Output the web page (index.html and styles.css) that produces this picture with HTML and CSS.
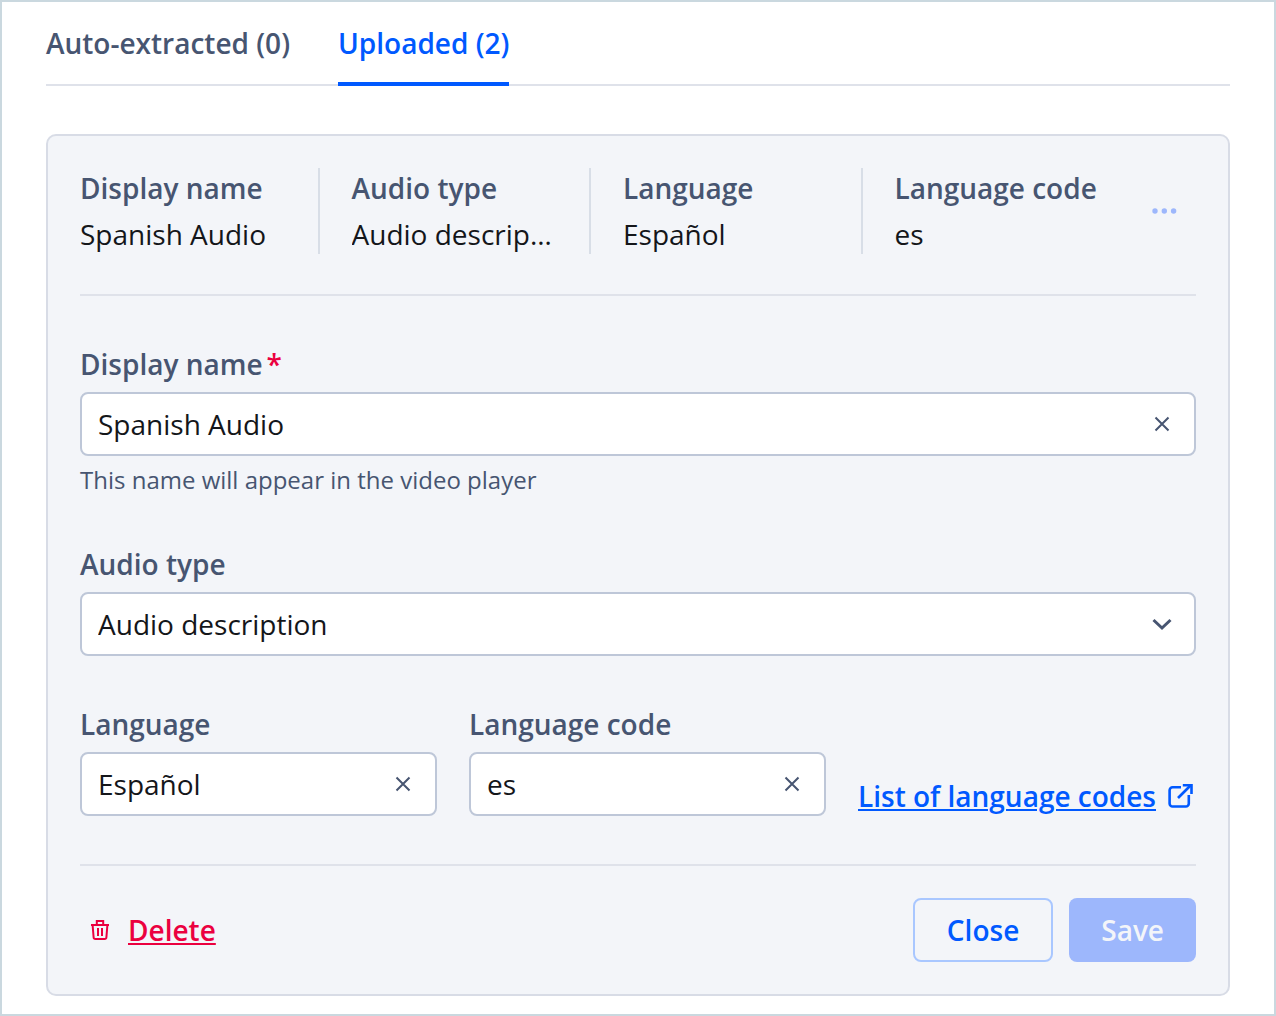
FILE: index.html
```html
<!DOCTYPE html>
<html lang="en">
<head>
<meta charset="utf-8">
<meta name="viewport" content="width=device-width, initial-scale=1">
<title>Audio tracks</title>
<link rel="stylesheet" href="styles.css">
</head>
<body>
<main class="panel">
  <div class="tabs" role="tablist">
    <button class="tab" type="button" role="tab" aria-selected="false">Auto-extracted (0)</button>
    <button class="tab tab-active" type="button" role="tab" aria-selected="true">Uploaded (2)</button>
  </div>

  <form class="card">
    <header class="summary">
      <dl class="summary-list">
        <div class="summary-item"><dt>Display name</dt><dd>Spanish Audio</dd></div>
        <div class="summary-item"><dt>Audio type</dt><dd>Audio description</dd></div>
        <div class="summary-item"><dt>Language</dt><dd>Español</dd></div>
        <div class="summary-item"><dt>Language code</dt><dd>es</dd></div>
      </dl>
      <button class="more" type="button" aria-label="More actions" disabled>
        <svg width="28" height="28" viewBox="0 0 28 28" fill="currentColor" aria-hidden="true"><circle cx="4" cy="14" r="2.7"/><circle cx="13.3" cy="14" r="2.7"/><circle cx="22.6" cy="14" r="2.7"/></svg>
      </button>
    </header>

    <div class="fields">
      <div class="field">
        <label class="label" for="display-name">Display name<span class="required">*</span></label>
        <div class="control">
          <input class="input" id="display-name" type="text" value="Spanish Audio" required aria-describedby="display-name-help">
          <button class="clear" type="button" aria-label="Clear display name"><svg class="icon" viewBox="0 0 28 28" aria-hidden="true"><path d="M7.5 7.5l13 13M20.5 7.5l-13 13"/></svg></button>
        </div>
        <p class="help" id="display-name-help">This name will appear in the video player</p>
      </div>

      <div class="field">
        <label class="label" for="audio-type">Audio type</label>
        <div class="select-wrap">
          <select class="select" id="audio-type"><option>Audio description</option></select>
          <svg class="icon chevron" viewBox="0 0 28 28" aria-hidden="true"><path d="M5.500 10l8.500 8 8.500-8"/></svg>
        </div>
      </div>

      <div class="row">
        <div class="field">
          <label class="label" for="language">Language</label>
          <div class="control">
            <input class="input" id="language" type="text" value="Español">
            <button class="clear" type="button" aria-label="Clear language"><svg class="icon" viewBox="0 0 28 28" aria-hidden="true"><path d="M7.5 7.5l13 13M20.5 7.5l-13 13"/></svg></button>
          </div>
        </div>
        <div class="field">
          <label class="label" for="language-code">Language code</label>
          <div class="control">
            <input class="input" id="language-code" type="text" value="es">
            <button class="clear" type="button" aria-label="Clear language code"><svg class="icon" viewBox="0 0 28 28" aria-hidden="true"><path d="M7.5 7.5l13 13M20.5 7.5l-13 13"/></svg></button>
          </div>
        </div>
        <a class="codes-link" href="#codes"><span class="underlined">List of language codes</span><svg width="32" height="32" viewBox="0 0 32 32" fill="none" stroke="currentColor" stroke-width="2.6" aria-hidden="true"><path d="M17 7.3H8.6a3 3 0 0 0-3 3v13.2a3 3 0 0 0 3 3h13.2a3 3 0 0 0 3-3V15"/><path d="M14 18L26.5 5.5"/><path d="M18.800 5.300H27.500V14" stroke-width="2.600"/></svg></a>
      </div>
    </div>

    <footer class="actions">
      <button class="delete" type="button"><svg width="24" height="24" viewBox="0 0 24 24" fill="none" stroke="currentColor" stroke-width="2" aria-hidden="true"><path d="M3 7h18M8.800 7V3h6.400v4M4.600 7l1 12.200a1.900 1.900 0 0 0 1.900 1.800h9a1.900 1.900 0 0 0 1.900-1.800L19.400 7M10 10v8M14 10v8"/></svg><span class="underlined">Delete</span></button>
      <div class="buttons">
        <button class="button button-outline" type="button">Close</button>
        <button class="button button-primary" type="submit" disabled>Save</button>
      </div>
    </footer>
  </form>
</main>
</body>
</html>
```
FILE: styles.css
```css
* {
  box-sizing: border-box;
}

body {
  margin: 0;
  background: #fff;
  color: #14161a;
  font-family: "Open Sans", "Noto Sans", sans-serif;
  font-size: 28px;
  line-height: 40px;
}

button,
input,
select {
  margin: 0;
  padding: 0;
  border: 0;
  background: none;
  color: inherit;
  font: inherit;
}

svg {
  display: block;
  flex: none;
}

.panel {
  padding: 0 44px 18px;
  border: 2px solid #cad8df;
}

.tabs {
  display: flex;
  gap: 48px;
  margin-bottom: 48px;
  box-shadow: inset 0 -2px #dfe2ea;
}

.tab {
  padding: 22px 0 20px;
  border-bottom: 4px solid transparent;
  color: #475571;
  font-weight: 600;
  line-height: 38px;
}

.tab-active {
  border-color: #0059ff;
  color: #0059ff;
}

.card {
  padding: 32px;
  border: 2px solid #d8dce6;
  border-radius: 10px;
  background: #f3f5f9;
}

.summary {
  display: flex;
  align-items: center;
  padding-bottom: 40px;
  border-bottom: 2px solid #dfe2ea;
}

.summary-list {
  flex: 1;
  display: grid;
  grid-template-columns: repeat(4, minmax(0, 1fr));
  gap: 32px;
  margin: 0;
}

.summary-item {
  display: grid;
  grid-template-columns: minmax(0, 1fr);
  gap: 6px;
  padding-right: 32px;
  border-right: 2px solid #d8dee7;
}

.summary-item:last-child {
  padding-right: 0;
  border-right: 0;
}

.summary-item dt {
  color: #475571;
  font-weight: 600;
}

.summary-item dd {
  margin: 0;
  overflow: hidden;
  text-overflow: ellipsis;
  white-space: nowrap;
}

.more {
  display: flex;
  justify-content: center;
  width: 62px;
  color: #9db7fc;
}

.fields {
  display: grid;
  grid-template-columns: minmax(0, 1fr);
  gap: 48px;
  padding: 48px 0;
  border-bottom: 2px solid #dfe2ea;
}

.field {
  display: grid;
  grid-template-columns: minmax(0, 1fr);
  gap: 8px;
}

.label {
  color: #475571;
  font-weight: 600;
}

.required {
  margin-left: 4px;
  color: #eb003f;
}

.control {
  display: flex;
  align-items: center;
  height: 64px;
  padding: 0 18px 0 16px;
  border: 2px solid #bec7d8;
  border-radius: 8px;
  background: #fff;
}

.input {
  flex: 1;
  min-width: 0;
  height: 60px;
  outline: 0;
}

.icon {
  width: 28px;
  height: 28px;
  fill: none;
  stroke: #475571;
  stroke-width: 2;
}

.select-wrap {
  display: grid;
  align-items: center;
}

.select {
  grid-area: 1 / 1;
  width: 100%;
  height: 64px;
  padding: 0 64px 0 16px;
  border: 2px solid #bec7d8;
  border-radius: 8px;
  background: #fff;
  appearance: none;
}

.chevron {
  grid-area: 1 / 1;
  justify-self: end;
  margin-right: 20px;
  stroke-width: 3;
  pointer-events: none;
}

.help {
  margin: 0;
  color: #475571;
  font-size: 24px;
  line-height: 32px;
}

.row {
  display: flex;
  align-items: flex-end;
  gap: 32px;
}

.row .field {
  flex: 1;
  min-width: 0;
}

.codes-link {
  display: flex;
  align-items: center;
  gap: 8px;
  color: #0059ff;
  font-weight: 600;
  text-decoration: none;
}

.underlined {
  text-decoration: underline;
  text-decoration-thickness: 2px;
  text-underline-offset: 2px;
}

.actions {
  display: flex;
  align-items: center;
  justify-content: space-between;
  padding-top: 32px;
}

.delete {
  display: flex;
  align-items: center;
  gap: 16px;
  padding-left: 8px;
  color: #eb003f;
  font-weight: 600;
}

.buttons {
  display: flex;
  gap: 16px;
}

.button {
  height: 64px;
  padding: 0 32px;
  border-radius: 8px;
  font-weight: 600;
}

.button-outline {
  border: 2px solid #a9c7ff;
  color: #0059ff;
}

.button-primary {
  background: #9db7fc;
  color: #f3f5f9;
}
```
